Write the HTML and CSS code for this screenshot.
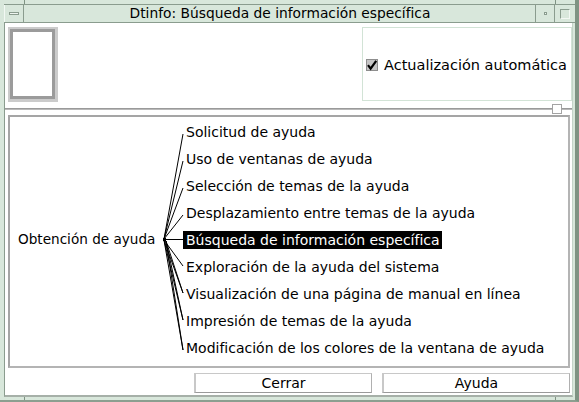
FILE: index.html
```html
<!DOCTYPE html>
<html lang="es">
<head>
<meta charset="utf-8">
<title>Dtinfo</title>
<link rel="stylesheet" href="styles.css">
</head>
<body>
<div class="window">
  <div class="titlebar">
    <div class="tb-menu"><span class="tb-dash"></span></div>
    <div class="tb-title">Dtinfo: Búsqueda de información específica</div>
    <div class="tb-min"><span class="tb-dot"></span></div>
    <div class="tb-max"><span class="tb-square"></span></div>
  </div>
  <div class="client">
    <div class="top-pane">
      <div class="graphic"><div class="graphic-inner"></div></div>
      <div class="auto-box">
        <label class="auto-check">
          <svg class="checkbox" width="12" height="12" viewBox="0 0 12 12">
            <rect x="0.5" y="0.5" width="11" height="11" fill="#c6c6c6" stroke="#8e8e8e"/>
            <path d="M2 6.2 L4.6 9.6 L10.2 1.8" fill="none" stroke="#000" stroke-width="2.2" stroke-linejoin="miter"/>
          </svg>
          <span>Actualización automática</span>
        </label>
      </div>
    </div>
    <div class="sash-row">
      <div class="sash-line"></div>
      <div class="sash"></div>
      <div class="sash-line sash-line-end"></div>
    </div>
    <div class="tree-panel">
      <div class="tree">
        <div class="root">Obtención de ayuda</div>
        <svg class="links" width="19" height="243" viewBox="0 0 19 243">
          <g stroke="#000" stroke-width="1" fill="none">
            <line x1="0" y1="121" x2="19" y2="16"/>
            <line x1="0" y1="121" x2="19" y2="43"/>
            <line x1="0" y1="121" x2="19" y2="70"/>
            <line x1="0" y1="121" x2="19" y2="97"/>
            <line x1="0" y1="121.5" x2="19" y2="121.5"/>
            <line x1="0" y1="122" x2="19" y2="148"/>
            <line x1="0" y1="122" x2="19" y2="175"/>
            <line x1="0" y1="122" x2="19" y2="202"/>
            <line x1="0" y1="122" x2="19" y2="232"/>
            <line x1="2" y1="123" x2="19" y2="175"/>
            <line x1="2" y1="123" x2="19" y2="202"/>
            <line x1="2" y1="123" x2="19" y2="232"/>
          </g>
          <rect x="-1" y="120" width="3" height="3" fill="#000"/>
        </svg>
        <ul class="nodes">
          <li class="node"><span class="label">Solicitud de ayuda</span></li>
          <li class="node"><span class="label">Uso de ventanas de ayuda</span></li>
          <li class="node"><span class="label">Selección de temas de la ayuda</span></li>
          <li class="node"><span class="label">Desplazamiento entre temas de la ayuda</span></li>
          <li class="node"><span class="label selected">Búsqueda de información específica</span></li>
          <li class="node"><span class="label">Exploración de la ayuda del sistema</span></li>
          <li class="node"><span class="label">Visualización de una página de manual en línea</span></li>
          <li class="node"><span class="label">Impresión de temas de la ayuda</span></li>
          <li class="node"><span class="label">Modificación de los colores de la ventana de ayuda</span></li>
        </ul>
      </div>
    </div>
    <div class="buttons">
      <button class="btn btn-close">Cerrar</button>
      <button class="btn btn-help">Ayuda</button>
    </div>
  </div>
</div>
</body>
</html>
```

FILE: styles.css
```css
* { box-sizing: border-box; }

html, body {
  margin: 0;
  padding: 0;
  background: #d8e7db;
}

body {
  font-family: "DejaVu Sans", sans-serif;
  font-size: 14px;
  color: #000;
}

.window {
  position: relative;
  width: 579px;
  height: 402px;
  background: #d8e7db;
  padding: 4px 0 3px 4px;
  border-right: 4px solid #7f9383;
  border-bottom: 2px solid #8c9f90;
  display: flex;
  flex-direction: column;
  overflow: hidden;
}

.window::before {
  content: "";
  position: absolute;
  left: 24px;
  top: 0;
  width: 1px;
  height: 4px;
  background: #7f9383;
  box-shadow: 531px 0 #7f9383, 0 397px #7f9383, 531px 397px #7f9383;
}

/* title bar */
.titlebar {
  height: 19px;
  flex: none;
  display: flex;
  border-top: 1px solid #8a9c8e;
  border-bottom: 1px solid #8a9c8e;
  background: #d8e7db;
}

.tb-menu,
.tb-min,
.tb-max {
  width: 20px;
  flex: none;
  display: flex;
  align-items: center;
  justify-content: center;
}

.tb-menu { border-right: 1px solid #8a9c8e; border-left: 1px solid #f2f8f3; }
.tb-min { border-left: 1px solid #8a9c8e; border-right: 1px solid #8a9c8e; }

.tb-dash {
  width: 10px;
  height: 3px;
  border: 1px solid #8a9c8e;
  background: #eef5ef;
}

.tb-dot {
  width: 3px;
  height: 3px;
  border: 1px solid #8a9c8e;
  background: #eef5ef;
}

.tb-square {
  width: 10px;
  height: 10px;
  border: 1px solid #8a9c8e;
  border-right-color: #f2f8f3;
  border-bottom-color: #f2f8f3;
}

.tb-title {
  flex: 1;
  text-align: center;
  line-height: 17px;
  font-size: 13.8px;
  white-space: nowrap;
  padding-left: 1px;
}

/* client area */
.client {
  flex: 1;
  margin-right: 2px;
  background: #ffffff;
  border-left: 1px solid #8a9c8e;
  border-right: 1px solid #c4d4c8;
  border-bottom: 2px solid #a6b0a8;
  display: flex;
  flex-direction: column;
}

.top-pane {
  height: 79px;
  flex: none;
  display: flex;
  justify-content: space-between;
  align-items: flex-start;
  padding: 4px 0 0 3px;
}

.graphic {
  width: 50px;
  height: 75px;
  background: #cbcbcb;
  padding: 2px 3px 3px 2px;
}

.graphic-inner {
  width: 100%;
  height: 100%;
  border: 3px solid #9b9b9b;
  background: #ffffff;
}

.auto-box {
  width: 210px;
  height: 74px;
  border: 1px solid #d2e3d6;
  display: flex;
  align-items: center;
  padding-left: 3px;
}

.auto-check {
  display: flex;
  align-items: center;
  gap: 6px;
  font-size: 14.5px;
  white-space: nowrap;
  padding-top: 2px;
}

.checkbox { flex: none; display: block; }

/* sash */
.sash-row {
  height: 13px;
  flex: none;
  display: flex;
  align-items: center;
}

.sash-line {
  flex: 1;
  height: 2px;
  border-top: 1px solid #9a9a9a;
  border-bottom: 1px solid #b9b9b9;
}

.sash-line-end {
  flex: none;
  width: 10px;
}

.sash {
  width: 10px;
  height: 10px;
  flex: none;
  background: #ffffff;
  border: 1px solid #a3a3a3;
}

/* tree */
.tree-panel {
  height: 253px;
  flex: none;
  margin: 0 2px 0 3px;
  border: 2px solid #a5a5a5;
  border-right-color: #b4b4b4;
  border-bottom-color: #b4b4b4;
  padding: 1px 0 0 8px;
}

.tree {
  display: flex;
  align-items: center;
  height: 243px;
}

.root {
  width: 146px;
  flex: none;
  white-space: nowrap;
  font-size: 13.6px;
  padding-bottom: 1px;
}

.links {
  flex: none;
  display: block;
  overflow: visible;
}

.nodes {
  list-style: none;
  margin: 0;
  padding: 0;
  display: flex;
  flex-direction: column;
}

.node {
  height: 27px;
  display: flex;
  align-items: center;
}

.label {
  display: block;
  height: 18px;
  line-height: 18px;
  padding: 0 2px 0 3px;
  white-space: nowrap;
}

.selected {
  background: #000000;
  color: #ffffff;
}

/* buttons */
.buttons {
  flex: none;
  display: flex;
  gap: 10px;
  margin-top: 5px;
  padding-left: 189px;
}

.btn {
  height: 20px;
  margin: 0;
  padding: 0;
  background: #ffffff;
  border-top: 1px solid #c8c8c8;
  border-left: 2px solid #c8c8c8;
  border-right: 1px solid #b0b0b0;
  border-bottom: 1px solid #9a9a9a;
  font-family: "DejaVu Sans", sans-serif;
  font-size: 14px;
  color: #000;
  line-height: 17px;
}

.btn-close { width: 178px; }
.btn-help { width: 188px; }
```
